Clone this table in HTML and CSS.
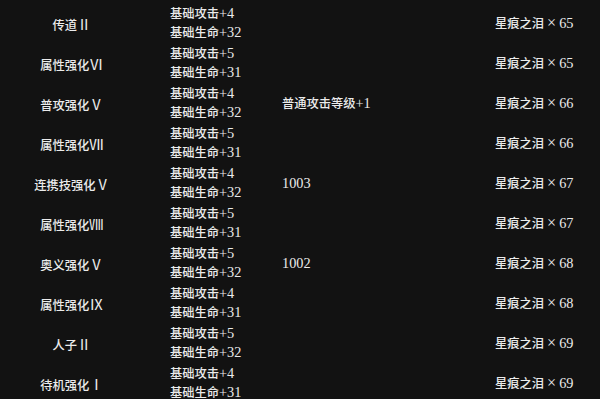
FILE: index.html
```html
<!DOCTYPE html>
<html lang="zh">
<head>
<meta charset="utf-8">
<link rel="stylesheet" href="styles.css">
</head>
<body>
<div class="table">
  <div class="row"><div class="name">传道<span class="n">Ⅱ</span></div><div class="stats"><span>基础攻击<span class="n">+4</span></span><span>基础生命<span class="n">+32</span></span></div><div class="extra"></div><div class="cost">星痕之泪 <span class="x">×</span> <span class="n">65</span></div></div>
  <div class="row"><div class="name">属性强化<span class="n">Ⅵ</span></div><div class="stats"><span>基础攻击<span class="n">+5</span></span><span>基础生命<span class="n">+31</span></span></div><div class="extra"></div><div class="cost">星痕之泪 <span class="x">×</span> <span class="n">65</span></div></div>
  <div class="row"><div class="name">普攻强化<span class="n">Ⅴ</span></div><div class="stats"><span>基础攻击<span class="n">+4</span></span><span>基础生命<span class="n">+32</span></span></div><div class="extra">普通攻击等级<span class="n">+1</span></div><div class="cost">星痕之泪 <span class="x">×</span> <span class="n">66</span></div></div>
  <div class="row"><div class="name">属性强化<span class="n">Ⅶ</span></div><div class="stats"><span>基础攻击<span class="n">+5</span></span><span>基础生命<span class="n">+31</span></span></div><div class="extra"></div><div class="cost">星痕之泪 <span class="x">×</span> <span class="n">66</span></div></div>
  <div class="row"><div class="name">连携技强化<span class="n">Ⅴ</span></div><div class="stats"><span>基础攻击<span class="n">+4</span></span><span>基础生命<span class="n">+32</span></span></div><div class="extra"><span class="n">1003</span></div><div class="cost">星痕之泪 <span class="x">×</span> <span class="n">67</span></div></div>
  <div class="row"><div class="name">属性强化<span class="n">Ⅷ</span></div><div class="stats"><span>基础攻击<span class="n">+5</span></span><span>基础生命<span class="n">+31</span></span></div><div class="extra"></div><div class="cost">星痕之泪 <span class="x">×</span> <span class="n">67</span></div></div>
  <div class="row"><div class="name">奥义强化<span class="n">Ⅴ</span></div><div class="stats"><span>基础攻击<span class="n">+5</span></span><span>基础生命<span class="n">+32</span></span></div><div class="extra"><span class="n">1002</span></div><div class="cost">星痕之泪 <span class="x">×</span> <span class="n">68</span></div></div>
  <div class="row"><div class="name">属性强化<span class="n">Ⅸ</span></div><div class="stats"><span>基础攻击<span class="n">+4</span></span><span>基础生命<span class="n">+31</span></span></div><div class="extra"></div><div class="cost">星痕之泪 <span class="x">×</span> <span class="n">68</span></div></div>
  <div class="row"><div class="name">人子<span class="n">Ⅱ</span></div><div class="stats"><span>基础攻击<span class="n">+5</span></span><span>基础生命<span class="n">+32</span></span></div><div class="extra"></div><div class="cost">星痕之泪 <span class="x">×</span> <span class="n">69</span></div></div>
  <div class="row"><div class="name">待机强化<span class="n">Ⅰ</span></div><div class="stats"><span>基础攻击<span class="n">+4</span></span><span>基础生命<span class="n">+31</span></span></div><div class="extra"></div><div class="cost">星痕之泪 <span class="x">×</span> <span class="n">69</span></div></div>
</div>
</body>
</html>
```
FILE: styles.css
```css
html, body {
  margin: 0;
  padding: 0;
  background: #121212;
}
body {
  color: #ebebeb;
  font-family: "Liberation Serif", "Noto Sans CJK SC", serif;
  font-size: 12.25px;
  font-weight: 500;
  overflow: hidden;
}
.table {
  padding-top: 3px;
}
.row {
  display: grid;
  grid-template-columns: 144px 138px 213px 1fr;
  height: 40px;
  align-items: center;
}
.name {
  text-align: center;
}
.stats {
  display: flex;
  flex-direction: column;
  padding-left: 26px;
  line-height: 18px;
}
.cost {
  white-space: nowrap;
}
.n {
  font-size: 14.3px;
  font-weight: 400;
}
.x {
  font-size: 16px;
  font-weight: 400;
}
```
